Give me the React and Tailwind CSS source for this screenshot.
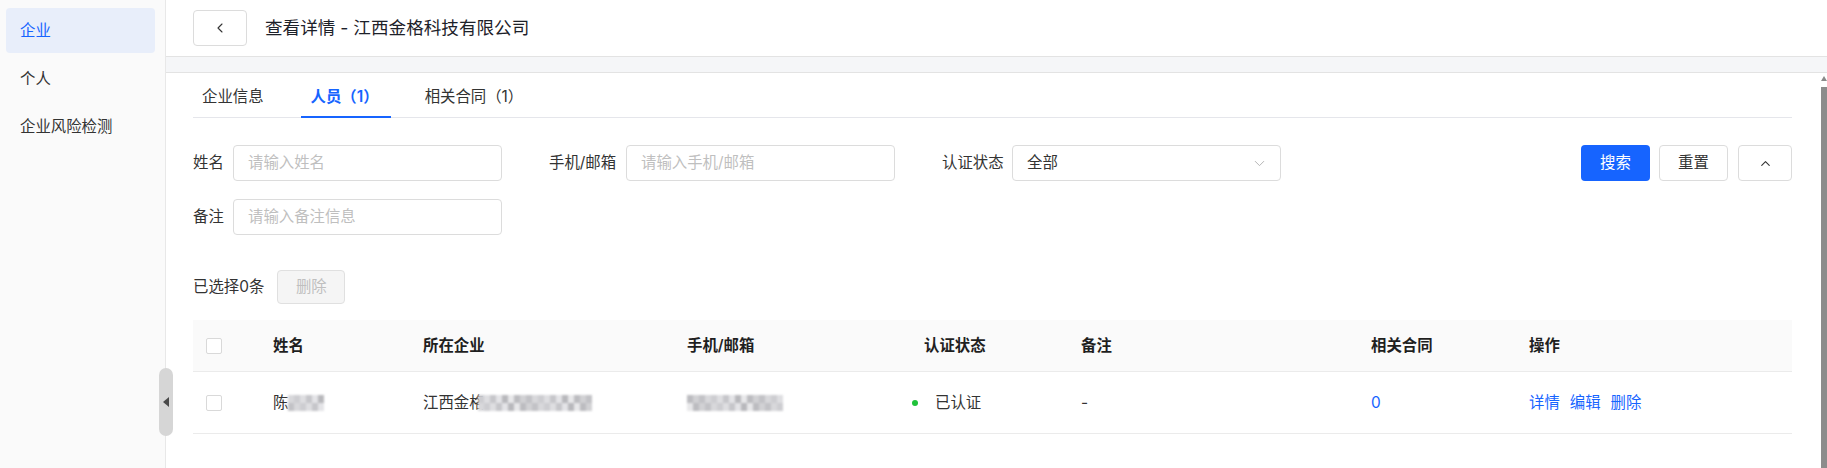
import React from 'react';
import { ChevronLeft, ChevronDown, ChevronUp } from 'lucide-react';

const FONT = "font-['Inter','Noto_Sans_CJK_SC',sans-serif]";

const MOSAIC_GRAYS = ['#c6c6ca', '#d8d8db', '#bcbcc0', '#e4e4e7', '#cdcdd1', '#d1d1d4', '#b8b8bc', '#dedee1', '#c2c2c6', '#e8e8ea'];

const Mosaic = ({ cols, seed = 0, className = '' }) => (
  <div className={`flex flex-col blur-[0.8px] ${className}`}>
    {[0, 1].map(r => (
      <div key={r} className="flex">
        {Array.from({ length: cols }).map((_, c) => (
          <div key={c} className="w-[6px] h-[8px]" style={{ backgroundColor: MOSAIC_GRAYS[(c * 3 + r * 7 + seed) % MOSAIC_GRAYS.length] }} />
        ))}
      </div>
    ))}
  </div>
);

const Field = ({ label, labelWidth, placeholder, className = '' }) => (
  <div className={`flex items-center ${className}`}>
    <span className="text-[#333] shrink-0" style={{ width: labelWidth }}>{label}</span>
    <div className="w-[269px] h-[36px] border border-[#dcdcdc] rounded-[4px] flex items-center px-[14px] text-[#bfbfbf]">{placeholder}</div>
  </div>
);

const Checkbox = () => <div className="w-[16px] h-[16px] border border-[#d9d9d9] rounded-[2px] bg-white" />;

const App = () => {
  return (
    <div className={`relative flex w-full h-[468px] overflow-hidden bg-white text-[15.4px] leading-none text-[#1d2129] ${FONT}`}>
      {/* sidebar */}
      <div className="w-[166px] shrink-0 bg-[#fafafa] border-r border-[#e8e8e8] pt-[8px] flex flex-col gap-[3px]">
        <div className="ml-[6px] w-[149px] h-[45px] rounded-[4px] bg-[#e8eefa] text-[#1664ff] flex items-center pl-[14px]">企业</div>
        <div className="ml-[6px] w-[149px] h-[45px] flex items-center pl-[14px] text-[#333]">个人</div>
        <div className="ml-[6px] w-[149px] h-[45px] flex items-center pl-[14px] text-[#333]">企业风险检测</div>
      </div>

      <div className="absolute left-[159px] top-[368px] w-[14px] h-[68px] rounded-full bg-[#d6d6d6] flex items-center justify-center">
        <div className="w-0 h-0 border-y-[5px] border-y-transparent border-r-[6px] border-r-[#4a4a4a]" />
      </div>

      {/* main */}
      <div className="flex-1 flex flex-col min-w-0">
        <div className="h-[57px] shrink-0 border-b border-[#e3e3e3] flex items-center pl-[27px]">
          <div className="w-[54px] h-[36px] border border-[#dcdcdc] rounded-[4px] flex items-center justify-center">
            <ChevronLeft className="w-[16px] h-[16px] text-[#333]" strokeWidth={1.6} />
          </div>
          <span className="ml-[18px] text-[17.6px] text-[#1d2129]">查看详情 - 江西金格科技有限公司</span>
        </div>
        <div className="h-[16px] shrink-0 bg-[#f5f6f8] border-b border-[#e3e3e3]" />

        <div className="flex-1 flex min-h-0">
          <div className="flex-1 pl-[27px] pr-[29px]">
            {/* tabs */}
            <div className="h-[45px] border-b border-[#e5e6eb] flex">
              <div className="h-full flex items-center pt-[4px] pl-[9px] text-[#333]">企业信息</div>
              <div className="relative h-full flex items-center pt-[4px] ml-[37px] pl-[10px] pr-[12px] text-[#1664ff] font-semibold">
                人员（1）
                <div className="absolute left-0 right-0 bottom-[-1px] h-[2px] bg-[#1664ff]" />
              </div>
              <div className="h-full flex items-center pt-[4px] ml-[24px] pl-[10px] text-[#333]">相关合同（1）</div>
            </div>

            {/* filters */}
            <div className="mt-[27px] flex items-center">
              <Field label="姓名" labelWidth={40} placeholder="请输入姓名" />
              <Field label="手机/邮箱" labelWidth={77} placeholder="请输入手机/邮箱" className="ml-[47px]" />
              <div className="flex items-center ml-[47px]">
                <span className="w-[70px] text-[#333]">认证状态</span>
                <div className="w-[269px] h-[36px] border border-[#dcdcdc] rounded-[4px] flex items-center justify-between pl-[14px] pr-[12px] text-[#333]">
                  全部
                  <ChevronDown className="w-[17px] h-[17px] text-[#b4b4b4]" strokeWidth={1.4} />
                </div>
              </div>
              <div className="ml-auto flex items-center">
                <div className="w-[69px] h-[36px] rounded-[4px] bg-[#1664ff] text-white flex items-center justify-center">搜索</div>
                <div className="ml-[9px] w-[69px] h-[36px] rounded-[4px] border border-[#dcdcdc] text-[#333] flex items-center justify-center">重置</div>
                <div className="ml-[10px] w-[54px] h-[36px] rounded-[4px] border border-[#dcdcdc] flex items-center justify-center">
                  <ChevronUp className="w-[15px] h-[15px] text-[#333]" strokeWidth={1.8} />
                </div>
              </div>
            </div>
            <div className="mt-[18px] flex items-center">
              <Field label="备注" labelWidth={40} placeholder="请输入备注信息" />
            </div>

            {/* selection bar */}
            <div className="mt-[35px] flex items-center">
              <span className="text-[#333]">已选择0条</span>
              <div className="ml-[13px] w-[68px] h-[34px] rounded-[4px] border border-[#e0e0e0] bg-[#f5f5f5] text-[#bfbfbf] flex items-center justify-center">删除</div>
            </div>

            {/* table */}
            <div className="mt-[16px]">
              <div className="grid grid-cols-[67px_150px_264px_237px_157px_290px_158px_1fr] h-[52px] items-center bg-[#fafafa] border-b border-[#ebebeb] font-semibold text-[#1f1f1f]">
                <div className="pl-[13px]"><Checkbox /></div>
                <div className="pl-[13px]">姓名</div>
                <div className="pl-[13px]">所在企业</div>
                <div className="pl-[13px]">手机/邮箱</div>
                <div className="pl-[13px]">认证状态</div>
                <div className="pl-[13px]">备注</div>
                <div className="pl-[13px]">相关合同</div>
                <div className="pl-[13px]">操作</div>
              </div>
              <div className="grid grid-cols-[67px_150px_264px_237px_157px_290px_158px_1fr] h-[62px] items-center border-b border-[#ebebeb] text-[#333]">
                <div className="pl-[13px]"><Checkbox /></div>
                <div className="pl-[13px] flex items-center">陈<Mosaic cols={6} seed={1} /></div>
                <div className="pl-[13px] flex items-center">江西金格<Mosaic cols={19} seed={4} className="-ml-[7px] bg-white" /></div>
                <div className="pl-[13px] flex items-center"><Mosaic cols={16} seed={2} /></div>
                <div className="pl-[1px] flex items-center">
                  <div className="w-[6px] h-[6px] rounded-full bg-[#1fc23a]" />
                  <span className="ml-[17px]">已认证</span>
                </div>
                <div className="pl-[13px]">-</div>
                <div className="pl-[13px] text-[#1664ff]">0</div>
                <div className="pl-[13px] flex items-center gap-[10px] text-[#1664ff]">
                  <span>详情</span><span>编辑</span><span>删除</span>
                </div>
              </div>
            </div>
          </div>

          {/* scrollbar */}
          <div className="w-[6px] shrink-0 flex flex-col items-center pt-[3px]">
            <div className="w-0 h-0 border-x-[3px] border-x-transparent border-b-[5px] border-b-[#8a8a8a]" />
            <div className="mt-[6px] w-full flex-1 bg-[#8c8c8c]" />
          </div>
        </div>
      </div>
    </div>
  );
};

export default App;
